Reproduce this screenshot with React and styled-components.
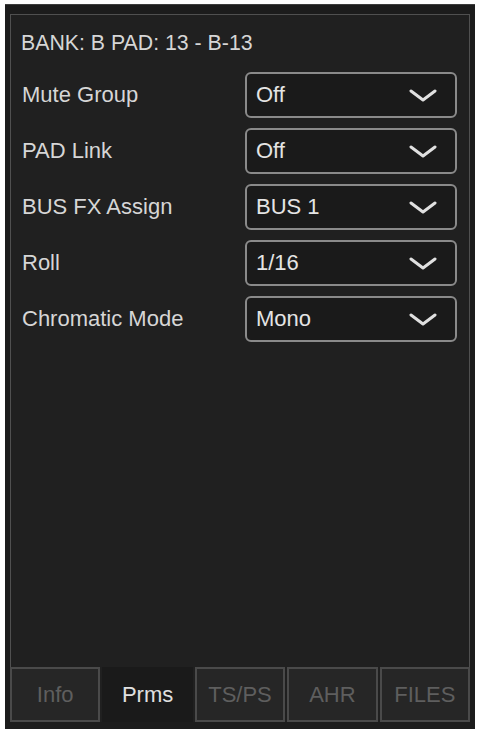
import { createGlobalStyle } from "styled-components";
import styled from "styled-components";

const GlobalStyle = createGlobalStyle`
  html, body {
    margin: 0;
    padding: 0;
    background: #ffffff;
  }
  body {
    font-family: "Liberation Sans", Arial, sans-serif;
  }
`;

const params = [
  { label: "Mute Group", value: "Off" },
  { label: "PAD Link", value: "Off" },
  { label: "BUS FX Assign", value: "BUS 1" },
  { label: "Roll", value: "1/16" },
  { label: "Chromatic Mode", value: "Mono" },
];

const tabs = ["Info", "Prms", "TS/PS", "AHR", "FILES"];

export default function App() {
  return (
    <>
      <GlobalStyle />
      <Frame>
        <Content>
          <Header>BANK: B PAD: 13 - B-13</Header>
          <ParamList>
            {params.map((p) => (
              <Row key={p.label}>
                <Label>{p.label}</Label>
                <Select>
                  <SelectValue>{p.value}</SelectValue>
                  <Chevron viewBox="0 0 28 13">
                    <path d="M2 2 L14 11 L26 2" />
                  </Chevron>
                </Select>
              </Row>
            ))}
          </ParamList>
        </Content>
        <TabBar>
          {tabs.map((t) => (
            <Tab key={t} $active={t === "Prms"}>
              {t}
            </Tab>
          ))}
        </TabBar>
      </Frame>
    </>
  );
}

const Frame = styled.div`
  box-sizing: border-box;
  margin: 4px 3px 0 5px;
  width: 470px;
  height: 725px;
  background: #1c1c1c;
  border-top: 1px solid #3c3c3c;
  padding: 9px 5px 7px 5px;
  display: flex;
  flex-direction: column;
`;

const Content = styled.div`
  flex: 1;
  background: #202020;
  border: 1px solid #505050;
  border-bottom: none;
  padding: 14px 12px 0 10px;
`;

const Header = styled.div`
  color: #d6d6d6;
  font-size: 21.3px;
  line-height: 28px;
  margin-bottom: 15px;
`;

const ParamList = styled.div`
  display: flex;
  flex-direction: column;
  gap: 10px;
`;

const Row = styled.div`
  display: grid;
  grid-template-columns: 224px 1fr;
  align-items: center;
`;

const Label = styled.div`
  color: #d6d6d6;
  font-size: 22px;
  padding-left: 1px;
`;

const Select = styled.div`
  box-sizing: border-box;
  height: 46px;
  border: 2px solid #8a8a8a;
  border-radius: 6px;
  background: #1a1a1a;
  display: flex;
  align-items: center;
  justify-content: space-between;
  padding: 0 18px 0 9px;
`;

const SelectValue = styled.span`
  color: #e4e4e4;
  font-size: 22px;
`;

const Chevron = styled.svg`
  width: 28px;
  height: 13px;
  fill: none;
  stroke: #e0e0e0;
  stroke-width: 3;
  stroke-linecap: round;
  stroke-linejoin: round;
`;

const TabBar = styled.div`
  display: grid;
  grid-template-columns: repeat(5, 1fr);
  gap: 2px;
  height: 55px;
  background: #202020;
`;

const Tab = styled.div`
  box-sizing: border-box;
  display: flex;
  align-items: center;
  justify-content: center;
  font-size: 22px;
  color: ${(p) => (p.$active ? "#e0e0e0" : "#5e5e5e")};
  background: ${(p) => (p.$active ? "#1a1a1a" : "#262626")};
  border: ${(p) => (p.$active ? "none" : "2px solid #4a4a4a")};
`;
